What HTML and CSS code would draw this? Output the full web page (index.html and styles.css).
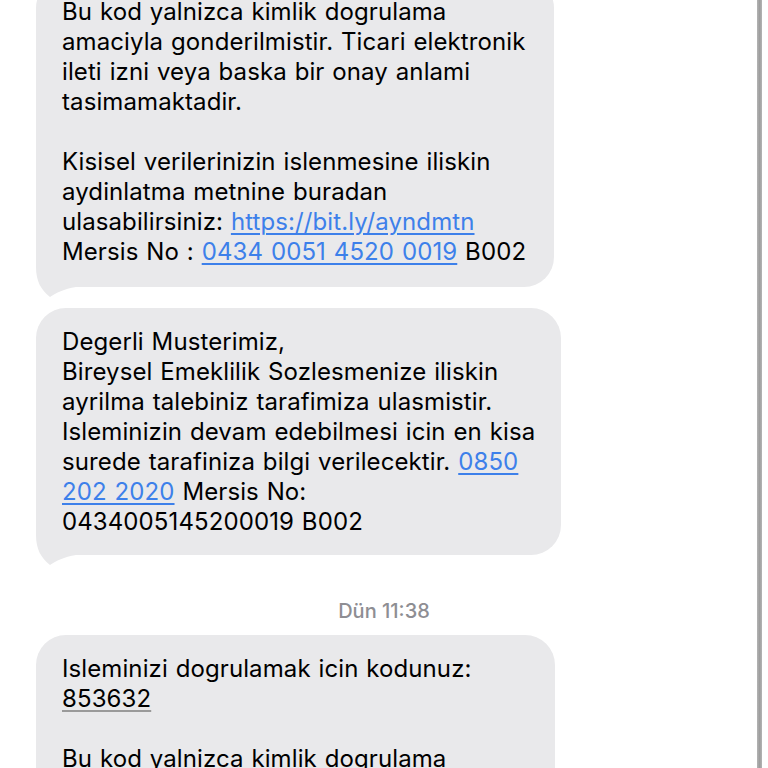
FILE: index.html
```html
<!DOCTYPE html>
<html lang="tr">
<head>
<meta charset="utf-8">
<title>Mesajlar</title>
<link rel="stylesheet" href="styles.css">
</head>
<body>
<div class="screen">
  <main class="thread">
    <div class="bubble b1">
      <p>Bu kod yalnizca kimlik dogrulama<br>amaciyla gonderilmistir. Ticari elektronik<br>ileti izni veya baska bir onay anlami<br>tasimamaktadir.<br><br>Kisisel verilerinizin islenmesine iliskin<br>aydinlatma metnine buradan<br>ulasabilirsiniz: <a class="link">https://bit.ly/ayndmtn</a><br>Mersis No : <a class="link">0434 0051 4520 0019</a> B002</p>
      <svg class="tail" width="40" height="52" viewBox="0 0 40 52"><path d="M0,0 L0,20 C0,34 5,43 14,50 C20,46 28,42 40,40 L40,0 Z"/></svg>
    </div>
    <div class="bubble b2">
      <p>Degerli Musterimiz,<br>Bireysel Emeklilik Sozlesmenize iliskin<br>ayrilma talebiniz tarafimiza ulasmistir.<br>Isleminizin devam edebilmesi icin en kisa<br>surede tarafiniza bilgi verilecektir. <a class="link">0850</a><br><a class="link">202 2020</a> Mersis No:<br>0434005145200019 B002</p>
      <svg class="tail" width="40" height="52" viewBox="0 0 40 52"><path d="M0,0 L0,20 C0,34 5,43 14,50 C20,46 28,42 40,40 L40,0 Z"/></svg>
    </div>
    <div class="stamp"><span class="day">Dün</span> 11:38</div>
    <div class="bubble b3">
      <p>Isleminizi dogrulamak icin kodunuz:<br><span class="code">853632</span><br><br>Bu kod yalnizca kimlik dogrulama<br>amaciyla gonderilmistir. Ticari elektronik<br>ileti izni veya baska bir onay anlami<br>tasimamaktadir.</p>
    </div>
  </main>
  <div class="scrollbar"></div>
</div>
</body>
</html>
```
FILE: styles.css
```css
html, body {
  margin: 0;
  padding: 0;
  background: #ffffff;
}
body {
  overflow: hidden;
  height: 768px;
}
.screen {
  display: flex;
  width: 768px;
  height: 768px;
  overflow: hidden;
}
.thread {
  width: 757px;
  padding-left: 36px;
  box-sizing: border-box;
  display: flex;
  flex-direction: column;
  align-items: flex-start;
  margin-top: -22px;
  font-family: Inter, "Noto Sans", "DejaVu Sans", sans-serif;
  font-size: 24px;
  letter-spacing: 0.1px;
  word-spacing: 1px;
  line-height: 30px;
  color: #000000;
}
.scrollbar {
  width: 5px;
  flex: none;
  background: linear-gradient(to right, #b4b4b4, #9e9e9e 50%, #b4b4b4);
  height: 768px;
}
.bubble {
  position: relative;
  background: #e9e9eb;
  border-radius: 30px;
  padding: 19px 26px 18px 26px;
  box-sizing: border-box;
}
.bubble p {
  margin: 0;
  white-space: nowrap;
  position: relative;
  z-index: 1;
}
.b1 {
  width: 518px;
  padding-bottom: 20px;
}
.b2 {
  width: 525px;
  margin-top: 21px;
}
.b3 {
  width: 519px;
}
.tail {
  position: absolute;
  left: 0;
  bottom: -12px;
  fill: #e9e9eb;
}
.link {
  color: #3d80ea;
  text-decoration: underline;
  text-decoration-thickness: 1.5px;
  text-underline-offset: 3px;
}
.code {
  text-decoration: underline;
  text-decoration-color: #9a9a9a;
  text-decoration-thickness: 1.5px;
  text-underline-offset: 3px;
}
.stamp {
  align-self: center;
  margin: 45px 0 13px 0;
  padding-right: 25px;
  font-size: 20px;
  letter-spacing: 0;
  word-spacing: 0;
  line-height: 22px;
  color: #8e8e93;
  font-weight: 500;
}
```
